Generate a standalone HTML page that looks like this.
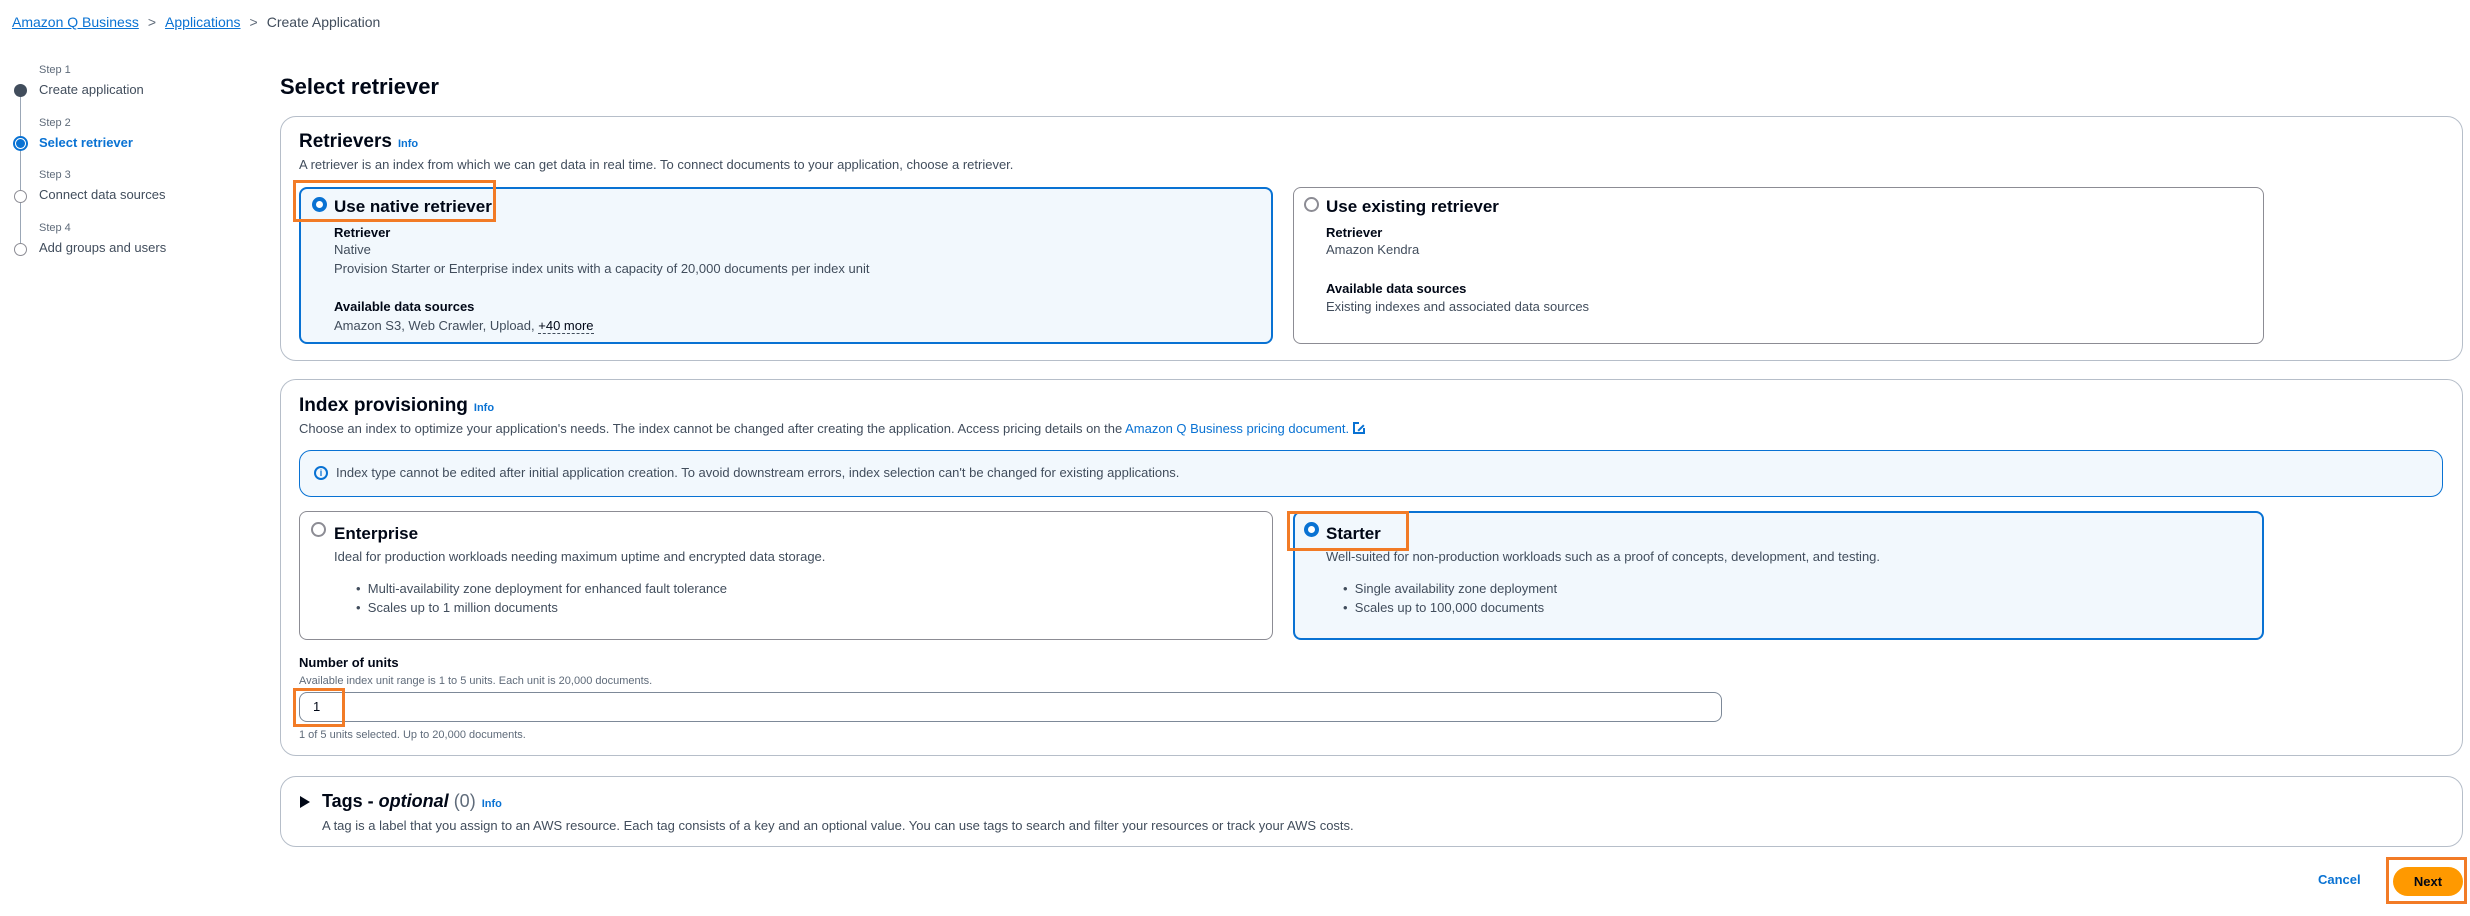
<!DOCTYPE html>
<html><head><meta charset="utf-8"><style>
*{box-sizing:border-box;margin:0;padding:0}
body{width:2470px;height:916px;background:#fff;font-family:"Liberation Sans",sans-serif;color:#000716;position:relative;overflow:hidden;font-size:13px}
.a{position:absolute;white-space:nowrap}
.link{color:#0972d3}
.muted{color:#5f6b7a}
.box{position:absolute;border:1px solid #b6bec9;border-radius:16px;background:#fff}
.card{position:absolute;border:1px solid #8c8c94;border-radius:8px;background:#fff}
.card.sel{border:2px solid #0972d3;background:#f2f8fd}
.radio{position:absolute;width:15px;height:15px;border-radius:50%;border:2px solid #8c8c94;background:#fff}
.radio.on{border:4px solid #0972d3}
.hl{position:absolute;border:3px solid #f27b26}
.h2{font-size:19px;font-weight:bold}
.info{font-size:11px;font-weight:bold;color:#0972d3;margin-left:6px}
.t{font-size:17px;font-weight:bold}
b{font-weight:bold}
.dot{position:absolute;width:13px;height:13px;border-radius:50%}
</style></head><body>

<div class="a" style="left:12px;top:14px;font-size:14px"><span class="link" style="text-decoration:underline">Amazon Q Business</span><span style="color:#5f6b7a;margin:0 9px">&gt;</span><span class="link" style="text-decoration:underline">Applications</span><span style="color:#5f6b7a;margin:0 9px">&gt;</span><span style="color:#414d5c">Create Application</span></div>

<!-- steps -->
<div class="a" style="left:20px;top:96px;width:1px;height:150px;background:#9ba7b6"></div>
<div class="dot" style="left:14px;top:84px;background:#414d5c"></div>
<div class="dot" style="left:13px;top:136px;border:2px solid #0972d3;background:#fff;width:15px;height:15px"></div>
<div class="dot" style="left:16px;top:139px;width:9px;height:9px;background:#0972d3"></div>
<div class="dot" style="left:14px;top:190px;border:1px solid #8c8c94;background:#fff"></div>
<div class="dot" style="left:14px;top:243px;border:1px solid #8c8c94;background:#fff"></div>
<div class="a muted" style="left:39px;top:64px;font-size:11px">Step 1</div>
<div class="a" style="left:39px;top:82px;font-size:13px;color:#414d5c">Create application</div>
<div class="a muted" style="left:39px;top:117px;font-size:11px">Step 2</div>
<div class="a" style="left:39px;top:135px;font-size:13px;color:#0972d3;font-weight:bold">Select retriever</div>
<div class="a muted" style="left:39px;top:169px;font-size:11px">Step 3</div>
<div class="a" style="left:39px;top:187px;font-size:13px;color:#414d5c">Connect data sources</div>
<div class="a muted" style="left:39px;top:222px;font-size:11px">Step 4</div>
<div class="a" style="left:39px;top:240px;font-size:13px;color:#414d5c">Add groups and users</div>

<div class="a" style="left:280px;top:74px;font-size:22px;font-weight:bold">Select retriever</div>

<!-- Retrievers -->
<div class="box" style="left:280px;top:116px;width:2183px;height:245px"></div>
<div class="a h2" style="left:299px;top:131px">Retrievers<span class="info">Info</span></div>
<div class="a" style="left:299px;top:157px;font-size:13px;color:#414d5c">A retriever is an index from which we can get data in real time. To connect documents to your application, choose a retriever.</div>
<div class="card sel" style="left:299px;top:187px;width:974px;height:157px"></div>
<div class="radio on" style="left:312px;top:197px"></div>
<div class="a t" style="left:334px;top:197px">Use native retriever</div>
<div class="a" style="left:334px;top:225px;font-size:13px;font-weight:bold">Retriever</div>
<div class="a" style="left:334px;top:242px;font-size:13px;color:#414d5c">Native</div>
<div class="a" style="left:334px;top:261px;font-size:13px;color:#414d5c">Provision Starter or Enterprise index units with a capacity of 20,000 documents per index unit</div>
<div class="a" style="left:334px;top:299px;font-size:13px;font-weight:bold">Available data sources</div>
<div class="a" style="left:334px;top:318px;font-size:13px;color:#414d5c">Amazon S3, Web Crawler, Upload, <span style="border-bottom:1px dashed #414d5c;color:#000716">+40 more</span></div>
<div class="hl" style="left:293px;top:180px;width:203px;height:42px"></div>

<div class="card" style="left:1293px;top:187px;width:971px;height:157px"></div>
<div class="radio" style="left:1304px;top:197px"></div>
<div class="a t" style="left:1326px;top:197px">Use existing retriever</div>
<div class="a" style="left:1326px;top:225px;font-size:13px;font-weight:bold">Retriever</div>
<div class="a" style="left:1326px;top:242px;font-size:13px;color:#414d5c">Amazon Kendra</div>
<div class="a" style="left:1326px;top:281px;font-size:13px;font-weight:bold">Available data sources</div>
<div class="a" style="left:1326px;top:299px;font-size:13px;color:#414d5c">Existing indexes and associated data sources</div>

<!-- Index provisioning -->
<div class="box" style="left:280px;top:379px;width:2183px;height:377px"></div>
<div class="a h2" style="left:299px;top:395px">Index provisioning<span class="info">Info</span></div>
<div class="a" style="left:299px;top:421px;font-size:13px;color:#414d5c">Choose an index to optimize your application's needs. The index cannot be changed after creating the application. Access pricing details on the <span class="link">Amazon Q Business pricing document.</span> <span style="display:inline-block;width:12px;height:12px;border:2px solid #0972d3;vertical-align:-1px;position:relative"><span style="position:absolute;right:-3px;top:-3px;width:7px;height:7px;background:#fff"></span><span style="position:absolute;left:2px;top:3px;width:8px;height:2px;background:#0972d3;transform:rotate(-45deg)"></span></span></div>
<div class="a" style="left:299px;top:450px;width:2144px;height:47px;border:1px solid #0972d3;border-radius:12px;background:#f2f8fd"></div>
<div class="a" style="left:314px;top:466px;width:14px;height:14px;border:2px solid #0972d3;border-radius:50%;font-size:9px;font-weight:bold;color:#0972d3;text-align:center;line-height:10px">i</div>
<div class="a" style="left:336px;top:465px;font-size:13px;color:#414d5c">Index type cannot be edited after initial application creation. To avoid downstream errors, index selection can't be changed for existing applications.</div>

<div class="card" style="left:299px;top:511px;width:974px;height:129px"></div>
<div class="radio" style="left:311px;top:522px"></div>
<div class="a t" style="left:334px;top:524px">Enterprise</div>
<div class="a" style="left:334px;top:549px;font-size:13px;color:#414d5c">Ideal for production workloads needing maximum uptime and encrypted data storage.</div>
<div class="a" style="left:356px;top:581px;font-size:13px;color:#414d5c">•&nbsp;&nbsp;Multi-availability zone deployment for enhanced fault tolerance</div>
<div class="a" style="left:356px;top:600px;font-size:13px;color:#414d5c">•&nbsp;&nbsp;Scales up to 1 million documents</div>

<div class="card sel" style="left:1293px;top:511px;width:971px;height:129px"></div>
<div class="radio on" style="left:1304px;top:522px"></div>
<div class="a t" style="left:1326px;top:524px">Starter</div>
<div class="a" style="left:1326px;top:549px;font-size:13px;color:#414d5c">Well-suited for non-production workloads such as a proof of concepts, development, and testing.</div>
<div class="a" style="left:1343px;top:581px;font-size:13px;color:#414d5c">•&nbsp;&nbsp;Single availability zone deployment</div>
<div class="a" style="left:1343px;top:600px;font-size:13px;color:#414d5c">•&nbsp;&nbsp;Scales up to 100,000 documents</div>
<div class="hl" style="left:1287px;top:511px;width:122px;height:40px"></div>

<div class="a" style="left:299px;top:655px;font-size:13px;font-weight:bold">Number of units</div>
<div class="a muted" style="left:299px;top:675px;font-size:11px">Available index unit range is 1 to 5 units. Each unit is 20,000 documents.</div>
<div class="a" style="left:299px;top:692px;width:1423px;height:30px;border:1px solid #7d8998;border-radius:8px"></div>
<div class="a" style="left:313px;top:699px;font-size:13px">1</div>
<div class="hl" style="left:293px;top:688px;width:52px;height:39px"></div>
<div class="a muted" style="left:299px;top:729px;font-size:11px">1 of 5 units selected. Up to 20,000 documents.</div>

<!-- Tags -->
<div class="box" style="left:280px;top:776px;width:2183px;height:71px"></div>
<div class="a" style="left:300px;top:796px;width:0;height:0;border-left:10px solid #000716;border-top:6px solid transparent;border-bottom:6px solid transparent"></div>
<div class="a h2" style="left:322px;top:791px;font-size:18px">Tags - <i>optional</i> <span style="font-weight:normal;color:#5f6b7a">(0)</span><span class="info">Info</span></div>
<div class="a" style="left:322px;top:818px;font-size:13px;color:#414d5c">A tag is a label that you assign to an AWS resource. Each tag consists of a key and an optional value. You can use tags to search and filter your resources or track your AWS costs.</div>

<div class="a link" style="left:2318px;top:872px;font-size:13px;font-weight:bold">Cancel</div>
<div class="a" style="left:2393px;top:867px;width:70px;height:29px;border-radius:15px;background:#ff9900;font-size:13px;font-weight:bold;text-align:center;line-height:29px">Next</div>
<div class="hl" style="left:2386px;top:857px;width:81px;height:47px"></div>
</body></html>
